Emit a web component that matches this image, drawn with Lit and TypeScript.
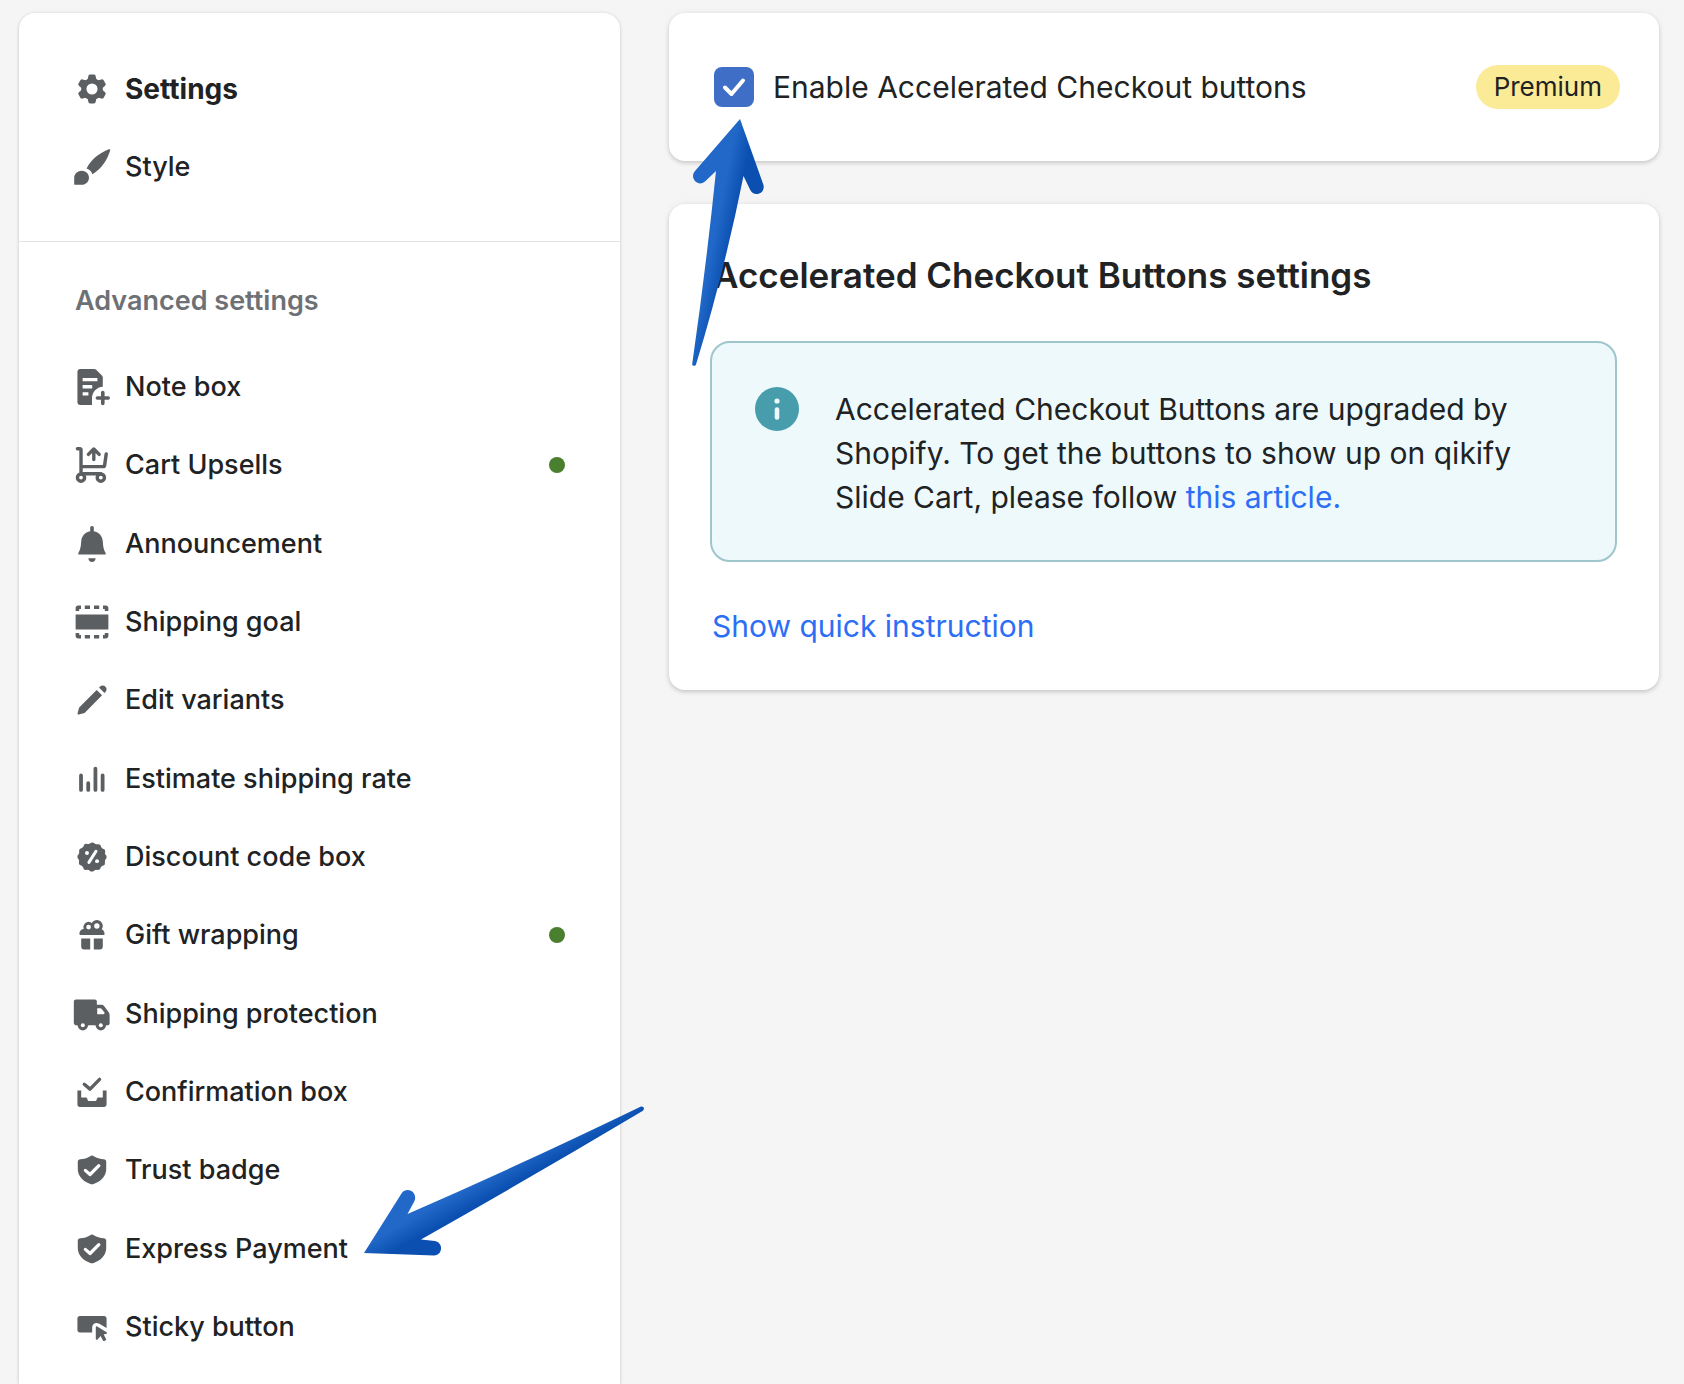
import { LitElement, html, svg, css, nothing, type SVGTemplateResult } from "lit";
import { customElement, property, state } from "lit/decorators.js";
import { classMap } from "lit/directives/class-map.js";

/* Every glyph is drawn on a 20-unit square and inherits currentColor. */
const shield = svg`
  <path d="M10 2c.4 0 .7.1 1 .4 1.600 1.100 3.500 1.500 5.500 1.600.8 0 1.400.6 1.400 1.400v4.100c0 4-3 7-7.300 8.400-.4.100-.8.100-1.200 0C5.100 16.500 2.100 13.500 2.100 9.500V5.400C2.100 4.600 2.700 4 3.500 4c2 0 3.900-.5 5.500-1.600.3-.3.600-.4 1-.4z"/>
  <path class="knock" d="M6.300 10.200l2.600 2.300 4.900-4.900" fill="none" stroke-width="1.800" stroke-linecap="round" stroke-linejoin="round"/>`;

const glyphs: Record<string, SVGTemplateResult> = {
  gear: svg`
    <circle cx="10" cy="10" r="6"/>
    ${[0, 60, 120].map((a) => svg`<path transform="rotate(${a} 10 10)" d="M8.900 2h2.200c.5 0 .8.300.9.800l.5 2.200v10l-.5 2.200c-.1.500-.4.800-.9.800H8.900c-.5 0-.8-.3-.9-.8L7.500 15V5L8 2.800c.1-.5.4-.8.900-.8z"/>`)}
    <circle class="hole" cx="10" cy="10" r="3.100"/>`,
  brush: svg`
    <path d="M19.300.2c.5-.3 1 .1.800.6-1.700 5.500-4.600 9.900-9.900 13.200-.4-1.500-1.500-2.700-3.200-3.200C9.400 6.100 13.400 2.700 19.300.2z"/>
    <path d="M4.300 12.100c2.200 0 4 1.700 4 3.900s-1.800 3.900-4 3.900H.6c-.3 0-.5-.2-.5-.5V16c0-2.200 2-3.900 4.200-3.900z"/>`,
  note: svg`
    <path d="M3.400 0h7.800c.4 0 .8.100 1.100.4l3.200 3.200c.3.300.5.700.5 1.100v5.100c-3.400.2-6 3-6 6.400V20H3.400c-.8 0-1.500-.7-1.500-1.500v-17C1.900.7 2.600 0 3.400 0z"/>
    <path class="knock" d="M4.800 5.900h8.200M4.800 9.900h5.300M4.800 13.800h3.200" fill="none" stroke-width="1.900"/>
    <path d="M16 13.100v6M13 16.100h6" fill="none" stroke="currentColor" stroke-width="2" stroke-linecap="round"/>`,
  cart: svg`
    <g fill="none" stroke="currentColor" stroke-width="1.900" stroke-linecap="round" stroke-linejoin="round">
      <path d="M1.900 1h1.300c.4 0 .7.300.7.700v13.200h11M3.900 10.900h12.200c.5 0 .9-.3.900-.8l.9-6.200"/>
      <path d="M11 7V1.400M8 4.100l3-3 3 3"/>
      <circle cx="3.900" cy="17" r="2"/><circle cx="14.900" cy="17" r="2"/>
    </g>`,
  bell: svg`
    <path d="M9 1c0-.6.400-1 1-1s1 .4 1 1v1.900c3 .5 4.800 2.800 5 5.600.2 2.800.3 4.200 1.600 6.600.2.400 0 .8-.4.800H2.800c-.4 0-.6-.4-.4-.8 1.300-2.400 1.400-3.800 1.600-6.600.2-2.800 2-5.100 5-5.600z"/>
    <path d="M8 17.900h4c0 1.100-.9 2.100-2 2.100s-2-1-2-2.100z"/>`,
  goal: svg`
    <path d="M.9 5.900h18.200v8.200H.9z"/>
    <path d="M6 .8h2.900v2H6zM11.100.8H14v2h-2.900zM6 17.200h2.900v2H6zM11.100 17.200H14v2h-2.900zM.9 3.900V2.200C.9 1.400 1.500.8 2.300.8h1.600v2h-1v1.100zM19.100 3.900V2.200c0-.8-.6-1.400-1.400-1.400h-1.600v2h1v1.100zM.9 16.100v1.700c0 .8.600 1.400 1.400 1.400h1.600v-2h-1v-1.100zM19.100 16.100v1.700c0 .8-.6 1.400-1.400 1.400h-1.600v-2h1v-1.100z"/>`,
  pencil: svg`
    <path d="M13.900 3.100l3 3 .6-.6c.8-.8.800-2.100 0-2.900-.9-.9-2.200-.9-3-.1zM15.600 7.400l-3-3L3.300 13.700c-.3.300-.5.600-.6 1l-.7 2.600c-.1.500.2.800.7.700l2.600-.6c.4-.1.800-.3 1-.6z"/>`,
  bars: svg`
    <path d="M3.900 8v8.100M7.900 12.300v3.800M11.900 4.300v11.800M15.900 8v8.100" fill="none" stroke="currentColor" stroke-width="2.100" stroke-linecap="round"/>`,
  discount: svg`
    <circle cx="10" cy="10" r="7.500"/>
    <circle cx="10" cy="10" r="6.600" fill="none" stroke="currentColor" stroke-width="3" stroke-linecap="round" stroke-dasharray="0 3.456"/>
    <path class="knock" d="M12.200 6.800l-3.900 6.200" fill="none" stroke-width="1.700" stroke-linecap="round"/>
    <circle class="hole" cx="7.200" cy="7.800" r="1.100"/><circle class="hole" cx="12.800" cy="12.300" r="1.100"/>`,
  gift: svg`
    <path d="M3 9.300c0-1.500 1-2.700 2.500-2.700h9C16 6.600 17 7.800 17 9.300c0 .4-.3.700-.7.700H3.700c-.4 0-.7-.3-.7-.7zM4 11.900h5V18H5.500c-.8 0-1.500-.7-1.500-1.500zM11 11.900h5v4.600c0 .8-.7 1.500-1.500 1.500H11z"/>
    <circle class="hole" cx="8.100" cy="5.600" r="2"/><circle class="hole" cx="12.700" cy="5" r="2.300"/>
    <circle cx="8.100" cy="5.600" r="2.100" fill="none" stroke="currentColor" stroke-width="1.600"/>
    <circle cx="12.700" cy="5" r="2.400" fill="none" stroke="currentColor" stroke-width="1.800"/>`,
  truck: svg`
    <path d="M1.100 2h10.500c.6 0 1.100.5 1.100 1.100v1.800h2.500c.6 0 1.100.2 1.500.7l2.500 3.300c.4.500.6 1.100.6 1.800v4.400c0 .7-.5 1.200-1.200 1.200H1.400C.6 16.300-.1 15.600-.1 14.800V3.200C-.1 2.500.4 2 1.100 2z"/>
    <path class="hole" d="M12.900 6.800h1.600c.4 0 .7.100.9.400l1.500 2c.2.400 0 .9-.5.900h-3.500z"/>
    <circle cx="4.900" cy="16.200" r="2.900"/><circle cx="14.900" cy="16.200" r="2.900"/>
    <circle class="hole" cx="4.900" cy="16.200" r="1.100"/><circle class="hole" cx="14.900" cy="16.200" r="1.100"/>`,
  confirm: svg`
    <path d="M5.700 5.700l3.200 2.700 5.300-5.400" fill="none" stroke="currentColor" stroke-width="1.900" stroke-linecap="round" stroke-linejoin="round"/>
    <path d="M1.900 9.200H4v3.900h2.700c.3 0 .5.200.6.500l.3.900c.1.300.3.500.6.500h3.700c.3 0 .5-.2.600-.5l.3-.9c.1-.3.300-.5.600-.5H16V9.200h2.100v7.700c0 .8-.7 1.400-1.400 1.400H3.300c-.8 0-1.400-.6-1.400-1.400z"/>`,
  shield,
  sticky: svg`
    <path d="M3.300 3.900h13.400c.8 0 1.400.7 1.400 1.400v5.300l-4.300-2.500c-1.800-.9-3.700.3-3.700 2.200V13H3.300c-.8 0-1.400-.6-1.400-1.400V5.300c0-.7.600-1.400 1.400-1.400z"/>
    <path d="M12.100 10.100c0-.4.400-.6.800-.4l5.200 3.200c.4.300.4.700-.1.800l-1.500.4 1.300 2.600c.1.300 0 .5-.2.700l-.8.400c-.3.100-.6 0-.7-.3l-1.300-2.500-1.700 1.900c-.3.400-1 .2-1-.4z"/>`,
};

const font = css`"Inter", "Liberation Sans", sans-serif`;

@customElement("nav-icon")
class NavIcon extends LitElement {
  @property() name = "gear";

  static styles = css`
    :host { display: block; width: 36px; height: 36px; flex: none; color: #5c5f62; }
    .glyph { display: block; width: 100%; height: 100%; fill: currentColor; overflow: visible; }
    .knock { stroke: #fff; }
    .hole { fill: #fff; }
  `;

  render() {
    return html`<svg class="glyph" viewBox="0 0 20 20" aria-hidden="true">${glyphs[this.name]}</svg>`;
  }
}

interface NavEntry {
  label: string;
  icon: string;
  active?: boolean;
  bold?: boolean;
  pointed?: boolean;
}

const general: NavEntry[] = [
  { label: "Settings", icon: "gear", bold: true },
  { label: "Style", icon: "brush" },
];

const advanced: NavEntry[] = [
  { label: "Note box", icon: "note" },
  { label: "Cart Upsells", icon: "cart", active: true },
  { label: "Announcement", icon: "bell" },
  { label: "Shipping goal", icon: "goal" },
  { label: "Edit variants", icon: "pencil" },
  { label: "Estimate shipping rate", icon: "bars" },
  { label: "Discount code box", icon: "discount" },
  { label: "Gift wrapping", icon: "gift", active: true },
  { label: "Shipping protection", icon: "truck" },
  { label: "Confirmation box", icon: "confirm" },
  { label: "Trust badge", icon: "shield" },
  { label: "Express Payment", icon: "shield", pointed: true },
  { label: "Sticky button", icon: "sticky" },
];

@customElement("settings-nav")
class SettingsNav extends LitElement {
  static styles = css`
    :host {
      display: flex;
      flex-direction: column;
      background: #fff;
      border-radius: 16px 16px 0 0;
      box-shadow: 0 0 4px rgba(23, 24, 24, 0.08), 0 1px 3px rgba(0, 0, 0, 0.14);
      font-family: ${font};
    }
    .list { list-style: none; margin: 0; padding: 0; display: grid; grid-auto-rows: minmax(78px, 1fr); }
    .general { padding: 37px 0 35px; border-bottom: 1px solid #e1e3e5; }
    .advanced { flex: 1; padding-bottom: 18px; }
    .title { margin: 0; padding: 42px 56px 30px; font-size: 27px; line-height: 34px; font-weight: 600; color: #6d7175; }
    .row { display: grid; position: relative; }
    .entry {
      display: flex;
      align-items: center;
      gap: 15px;
      border: 0;
      background: none;
      padding: 0 55px;
      font: 500 27px/34px ${font};
      color: #202223;
      text-align: left;
      cursor: pointer;
    }
    .bold { font-size: 28px; font-weight: 700; }
    .label { flex: 1; white-space: nowrap; }
    .dot { width: 16px; height: 16px; border-radius: 50%; background: #4a7f2f; }
    .pointer { position: absolute; left: 343px; top: calc(50% - 146px); width: 286px; height: 156px; z-index: 1; pointer-events: none; }
  `;

  private row(entry: NavEntry) {
    return html`<li class="row">
      <button class=${classMap({ entry: true, bold: !!entry.bold })} type="button">
        <nav-icon name=${entry.icon}></nav-icon>
        <span class="label">${entry.label}</span>
        ${entry.active ? html`<span class="dot" role="img" aria-label="Active"></span>` : nothing}
      </button>
      ${entry.pointed
        ? html`<svg class="pointer" viewBox="362 1102 286 156" aria-hidden="true">
            <defs>
              <linearGradient id="shaft" gradientUnits="userSpaceOnUse" x1="470" y1="1178" x2="484" y2="1203">
                <stop offset="0.2" stop-color="#2168c8" />
                <stop offset="0.9" stop-color="#0b50b0" />
              </linearGradient>
            </defs>
            <path fill="url(#shaft)" d="M364 1252L401.500 1192.500C407 1185 418 1191 414.500 1200L407.500 1213Q520 1164 641 1105.500C644 1105 645 1108 642.500 1110Q530 1177 421 1238.500L435 1240C443.500 1241.500 443 1254 434 1254.500Z" />
          </svg>`
        : nothing}
    </li>`;
  }

  render() {
    return html`
      <ul class="list general">${general.map((e) => this.row(e))}</ul>
      <h2 class="title">Advanced settings</h2>
      <ul class="list advanced">${advanced.map((e) => this.row(e))}</ul>
    `;
  }
}

@customElement("app-root")
class AppRoot extends LitElement {
  @state() private enabled = true;

  static styles = css`
    :host {
      display: block;
      min-height: 100vh;
      box-sizing: border-box;
      background: #f5f5f5;
      color: #202223;
      font: 400 30px/44px ${font};
    }
    .page {
      display: grid;
      grid-template-columns: minmax(0, 601fr) minmax(0, 990fr);
      gap: 49px;
      padding: 13px 25px 0 19px;
      min-height: 100vh;
      box-sizing: border-box;
    }
    .content { display: flex; flex-direction: column; gap: 43px; }
    .card {
      background: #fff;
      border-radius: 16px;
      box-shadow: 0 0 8px rgba(23, 24, 24, 0.05), 0 2px 4px rgba(0, 0, 0, 0.16);
    }
    .toggle { display: flex; align-items: center; justify-content: space-between; padding: 52px 39px 52px 45px; }
    .option { display: flex; align-items: center; gap: 19px; position: relative; cursor: pointer; }
    .mark { display: grid; width: 40px; height: 40px; }
    .box { grid-area: 1 / 1; appearance: none; margin: 0; width: 40px; height: 40px; border-radius: 8px; border: 2px solid #8c9196; background: #fff; }
    .box:checked { border: 0; background: #3f6ec6; }
    .tick { grid-area: 1 / 1; width: 40px; height: 40px; pointer-events: none; fill: none; stroke: #fff; stroke-width: 4px; stroke-linecap: round; stroke-linejoin: round; }
    .badge { padding: 0 18px; border-radius: 22px; background: #fbea96; font-size: 26px; }
    .pointer { position: absolute; left: -23px; top: 52px; width: 76px; height: 250px; z-index: 1; pointer-events: none; }
    .settings { padding: 49px 42px 42px 41px; }
    .heading { margin: 0 3px 44px; font-size: 35px; line-height: 44px; font-weight: 600; }
    .banner {
      display: flex;
      gap: 36px;
      padding: 44px 43px 41px;
      border: 2px solid #9fc5cd;
      border-radius: 20px;
      background: #edf9fb;
    }
    .info { width: 44px; height: 44px; flex: none; }
    .note { margin: 0; max-width: 720px; }
    .link { color: #2c6ef6; text-decoration: none; }
    .more { display: block; width: fit-content; margin: 42px 2px 0; }
  `;

  render() {
    return html`
      <div class="page">
        <settings-nav role="navigation"></settings-nav>
        <main class="content">
          <section class="card toggle">
            <label class="option">
              <span class="mark">
                <input
                  class="box"
                  type="checkbox"
                  .checked=${this.enabled}
                  @change=${(e: Event) => (this.enabled = (e.target as HTMLInputElement).checked)}
                />
                ${this.enabled
                  ? html`<svg class="tick" viewBox="0 0 40 40" aria-hidden="true"><path d="M11 20.500l6.500 6.500L29 13.500" /></svg>`
                  : nothing}
              </span>
              Enable Accelerated Checkout buttons
              <svg class="pointer" viewBox="691 117 76 250" aria-hidden="true">
                <defs>
                  <linearGradient id="shaft" gradientUnits="userSpaceOnUse" x1="714" y1="210" x2="739" y2="215">
                    <stop offset="0.2" stop-color="#2168c8" />
                    <stop offset="0.9" stop-color="#0b50b0" />
                  </linearGradient>
                </defs>
                <path fill="url(#shaft)" d="M740 119L763.500 185C765.500 194 753.500 197.500 750 189.500L743.500 176Q724 273 696 364.500C695.500 366.500 692 366 692.200 364Q706 268 716 171L705 181.500C698 187.500 689 178 695 171Z" />
              </svg>
            </label>
            <span class="badge">Premium</span>
          </section>
          <section class="card settings">
            <h1 class="heading">Accelerated Checkout Buttons settings</h1>
            <div class="banner">
              <svg class="info" viewBox="0 0 44 44" aria-hidden="true">
                <circle cx="22" cy="22" r="22" fill="#479dab" />
                <circle cx="22" cy="14" r="2.600" fill="#edf9fb" />
                <path d="M22 22.500v8" stroke="#edf9fb" stroke-width="4.600" stroke-linecap="round" />
              </svg>
              <p class="note">
                Accelerated Checkout Buttons are upgraded by Shopify. To get the buttons to show up on qikify Slide
                Cart, please follow <a class="link" href="#article">this article.</a>
              </p>
            </div>
            <a class="link more" href="#instruction">Show quick instruction</a>
          </section>
        </main>
      </div>
    `;
  }
}
